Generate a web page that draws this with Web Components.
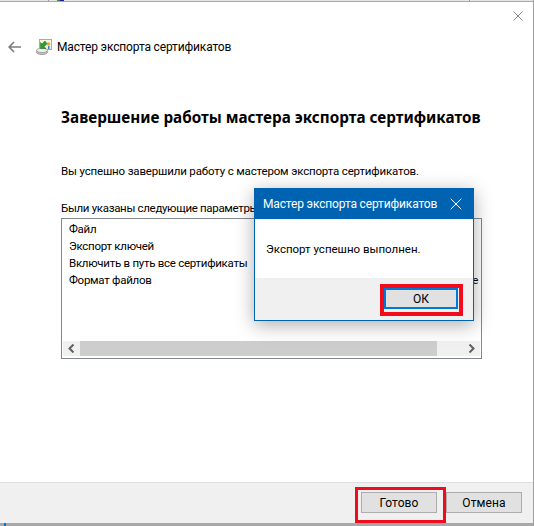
<!DOCTYPE html>
<html><head><meta charset="utf-8">
<style>
html,body{margin:0;padding:0;background:#fff;width:534px;height:526px;overflow:hidden}
</style></head><body>
<wizard-window></wizard-window>
<script>
const FONT='Roboto,"Noto Sans",sans-serif';
function el(name,html,css){
  customElements.define(name,class extends HTMLElement{
    constructor(){super();const r=this.attachShadow({mode:'open'});r.innerHTML='<style>'+css+'</style>'+html;}
  });
}
el('win-button','<button><slot></slot></button>',`
:host{display:block;position:relative;flex:none}
button{display:block;box-sizing:border-box;width:var(--w,76px);height:21px;margin:0;padding:0;background:#e1e1e1;border:1px solid #adadad;font:12px/1 ${FONT};letter-spacing:.1px;color:#000}
:host([primary]) button{border:2px solid #0078d7}
:host([marked])::after{content:"";position:absolute;left:var(--ml,-6px);top:var(--mt,-5px);right:var(--mr,-9px);bottom:var(--mb,-10px);border:var(--mw,3px) solid #f00c1c;pointer-events:none}
`);
el('scroll-track',`<span class="arr"><svg width="7" height="9" viewBox="0 0 7 9"><path d="M5.5 .5 1.5 4.5 5.5 8.5" fill="none" stroke="#606060" stroke-width="2"/></svg></span><span class="thumb"></span><span class="rest"></span><span class="arr"><svg width="7" height="9" viewBox="0 0 7 9"><path d="M1.5 .5 5.5 4.5 1.5 8.5" fill="none" stroke="#606060" stroke-width="2"/></svg></span>`,`
:host{display:flex;height:15px;background:#f0f0f0;align-items:stretch;flex:none}
.arr{width:17px;display:flex;align-items:center;justify-content:center}
.thumb{width:357px;background:#cdcdcd}.rest{flex:1}
`);
el('params-list',`<div class="items"><slot></slot></div><scroll-track></scroll-track>`,`
:host{display:flex;flex-direction:column;box-sizing:border-box;width:421px;height:141px;border:1px solid #828790;background:#fff;padding:1px 1px 2px}
.items{flex:1;padding:1px 2px 0 6px;font:11.5px/17px ${FONT};letter-spacing:-.27px}
`);
el('list-row',`<span><slot></slot></span><span><slot name="value"></slot></span>`,`
:host{display:flex;justify-content:space-between;white-space:nowrap}
`);
el('alert-dialog',`<div class="t"><span><slot name="title"></slot></span><svg width="12" height="12" viewBox="0 0 12 12"><path d="M.7.7 11.3 11.3M11.3.7 .7 11.3" stroke="#fff" stroke-width="1" fill="none"/></svg></div>
<div class="b"><slot name="body"></slot></div>
<div class="f"><win-button primary marked style="--w:74px;--ml:-4px;--mt:-4px;--mr:-5px;--mb:-7px;--mw:4px">ОК</win-button></div>`,`
:host{display:block;position:absolute;left:254px;top:188px;width:220px;height:133px;box-sizing:border-box;border:1px solid #0063b1;background:#fff;box-shadow:0 4px 18px rgba(0,0,0,.32)}
.t{height:30px;background:#0063b1;color:#fff;display:flex;justify-content:space-between;align-items:center;padding:0 11px 0 8px;font:12px/16px ${FONT};letter-spacing:-.15px;white-space:nowrap}
.b{height:59px;padding:22px 0 0 11px;box-sizing:border-box;font:11.5px/16px ${FONT}}
.f{height:42px;background:#f0f0f0;display:flex;justify-content:flex-end;align-items:flex-start;padding:10px 15px 0 0;box-sizing:border-box}
`);
el('cert-icon',`<svg width="17" height="16" viewBox="0 0 17 16">
<rect x="3.5" y=".5" width="12" height="10" fill="#f7f1df" stroke="#b7a98a"/>
<circle cx="12.5" cy="5" r="1.7" fill="#f2a72b"/><rect x="12" y="7" width="1.5" height="3" fill="#3a78c9"/>
<ellipse cx="6" cy="13" rx="5.5" ry="2.5" fill="#c8c8c8" stroke="#9a9a9a"/><ellipse cx="6" cy="11.4" rx="5.5" ry="2.2" fill="#ededed" stroke="#a5a5a5"/>
<path d="M9 2 6 5 4.5 3.5V9.5H10L8 7.8 11 4.8Z" fill="#2aa12a" stroke="#157015" stroke-width=".5"/></svg>`,`
:host{display:flex;width:17px;height:16px;flex:none}`);
el('wizard-window',`
<div class="edge"><i style="left:48px;background:#9a9a9a"></i><i style="left:57px;width:3px;background:#3a8a3a"></i><i style="left:60px;width:4px;background:#1a1a9a"></i><i style="left:469px;background:#9a9a9a"></i></div>
<div class="close"><svg width="10" height="10" viewBox="0 0 10 10"><path d="M.5.5 9.5 9.5M9.5.5 .5 9.5" stroke="#8a8a8a" fill="none"/></svg></div>
<header><svg class="back" width="13" height="12" viewBox="0 0 13 12"><path d="M6 1 1.2 6 6 11M1.5 6H13" fill="none" stroke="#7f7f7f" stroke-width="1.7"/></svg><cert-icon></cert-icon><span>Мастер экспорта сертификатов</span></header>
<main>
<h1>Завершение работы мастера экспорта сертификатов</h1>
<p class="ok">Вы успешно завершили работу с мастером экспорта сертификатов.</p>
<p class="par">Были указаны следующие параметры:</p>
<params-list><list-row>Файл</list-row><list-row>Экспорт ключей</list-row><list-row>Включить в путь все сертификаты</list-row><list-row>Формат файлов<span slot="value">е</span></list-row></params-list>
</main>
<footer><win-button marked>Готово</win-button><win-button>Отмена</win-button></footer>
<div class="strip"><i></i></div>
<alert-dialog><span slot="title">Мастер экспорта сертификатов</span><span slot="body">Экспорт успешно выполнен.</span></alert-dialog>
`,`
:host{display:flex;flex-direction:column;position:relative;width:534px;height:526px;box-sizing:border-box;background:#fff;font:12px/16px ${FONT};overflow:hidden;border-right:1px solid #a0a0a0;color:#000}
.edge{height:2px;box-sizing:border-box;border-bottom:1px solid #a8a8a8;background:#e6e6e6;flex:none;position:relative}
.edge i{position:absolute;top:0;width:1px;height:1px}
.close{position:absolute;left:513px;top:11px;width:10px;height:10px;line-height:0}
header{height:63px;display:flex;align-items:center;flex:none;box-sizing:border-box;padding:27px 0 0 8px;letter-spacing:-.15px}
.back{margin-right:15px;flex:none}
header span{margin-left:4px;white-space:nowrap}
main{flex:1;padding:0 0 0 61px;display:flex;flex-direction:column;align-items:flex-start}
h1{margin:0;padding-top:42px;font:700 15.25px/20px "Noto Sans",${FONT};white-space:nowrap}
.ok,.par{font-size:11.5px;white-space:nowrap}
.ok{margin:36px 0 0;letter-spacing:-.16px}
.par{margin:21px 0 0;letter-spacing:-.32px}
params-list{margin-top:2px}
footer{flex:none;height:41px;background:#f0f0f0;border-top:1px solid #dfdfdf;box-sizing:border-box;display:flex;justify-content:flex-end;align-items:flex-start;gap:9px;padding:9px 11px 0 0}
.strip{flex:none;height:3px;background:#a8a8a8;position:relative}
.strip i{position:absolute;left:4px;top:0;width:2px;height:3px;background:#0078d7}
`);
</script></body></html>
